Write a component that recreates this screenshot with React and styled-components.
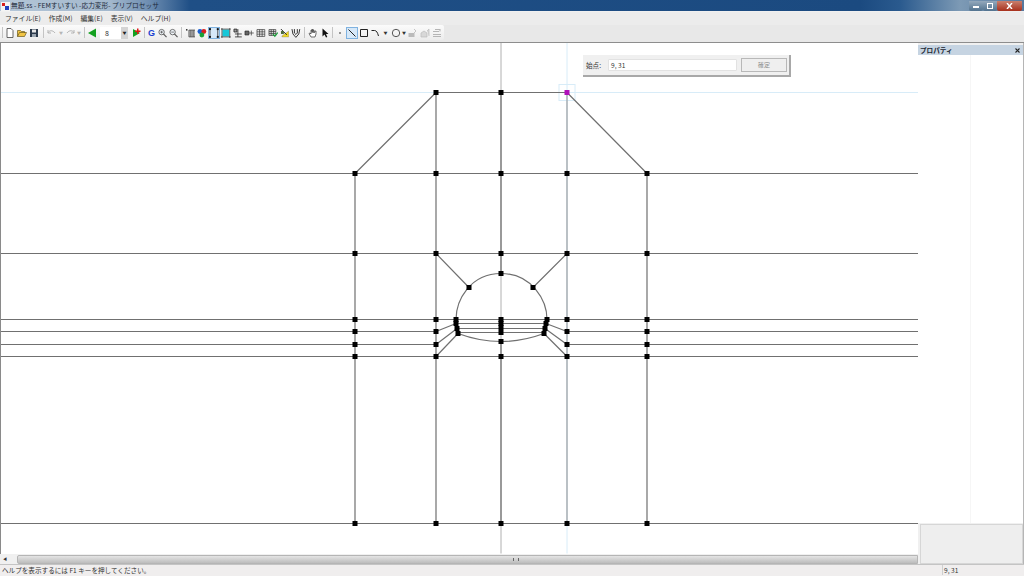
import React from 'react';
import styled, { createGlobalStyle } from 'styled-components';

const GlobalStyle = createGlobalStyle`
  html, body {
    margin: 0;
    padding: 0;
    width: 1024px;
    height: 576px;
    overflow: hidden;
    background: #f0f0f0;
    font-family: "Noto Sans CJK JP", "Liberation Sans", sans-serif;
  }
`;

const Window = styled.div`
  width: 1024px;
  height: 576px;
  display: flex;
  flex-direction: column;
  overflow: hidden;
`;

const TitleBar = styled.div`
  height: 11px;
  flex: none;
  display: flex;
  align-items: center;
  padding-left: 1px;
  background: linear-gradient(90deg, #b4c6d8 0, #a3b8cd 110px, #6c8cb0 150px, #1f4f86 190px, #1b4a80 860px, #2a5a8e 900px, #7d9ab5 960px, #55789e 1024px);
`;

const TitleText = styled.span`
  font-size: 6.7px;
  line-height: 11px;
  margin-left: 1px;
  color: #1d2a3a;
  white-space: nowrap;
`;

const WindowButtons = styled.div`
  margin-left: auto;
  margin-right: 2px;
  display: flex;
  height: 10px;
`;

const WindowButton = styled.div`
  width: ${({ wide }) => (wide ? '25px' : '14px')};
  height: 10px;
  display: flex;
  align-items: center;
  justify-content: center;
  background: ${({ wide }) => (wide ? 'linear-gradient(#c9806e, #a8301c)' : 'linear-gradient(#94a9bc, #52738f)')};
  border-radius: 0 0 2px 2px;
`;

const MenuBar = styled.div`
  height: 13px;
  flex: none;
  margin-top: 1px;
  display: flex;
  align-items: center;
  gap: 8px;
  padding-left: 5px;
  background: #ececec;
`;

const MenuItem = styled.span`
  font-size: 6.8px;
  line-height: 13px;
  color: #333;
  white-space: nowrap;
`;

const ToolRow = styled.div`
  height: 17px;
  flex: none;
  background: #e8e8e8;
  border-bottom: 1px solid #8d8d8d;
  display: flex;
  align-items: flex-start;
`;

const ToolBar = styled.div`
  width: 444px;
  height: 15px;
  padding-left: 1px;
  box-sizing: border-box;
  display: flex;
  align-items: center;
  background: linear-gradient(#fbfbfb, #ececec);
  border-radius: 0 2px 2px 0;
`;

const Tool = styled.div`
  width: ${({ w }) => w || 12}px;
  height: 12px;
  flex: none;
  box-sizing: border-box;
  display: flex;
  align-items: center;
  justify-content: center;
  border: 1px solid ${({ active }) => (active ? '#7fb2e0' : 'transparent')};
  background: ${({ active }) => (active ? '#d6e8f8' : 'transparent')};
`;

const Divider = styled.div`
  width: 1px;
  height: 11px;
  flex: none;
  margin: 0 ${({ m }) => m || 3}px;
  background: #c4c4c4;
`;

const SizeBox = styled.div`
  width: 28px;
  height: 12px;
  margin: 0 2px;
  flex: none;
  display: flex;
  align-items: center;
  background: #fff;
  font-size: 7px;
  color: #333;
  padding-left: 5px;
  box-sizing: border-box;
`;

const SizeArrow = styled.span`
  margin-left: auto;
  width: 7px;
  height: 12px;
  background: #d4d4d4;
  display: flex;
  align-items: center;
  justify-content: center;
  font-size: 4px;
  color: #222;
`;

const Main = styled.div`
  flex: 1;
  min-height: 0;
  display: flex;
`;

const Work = styled.div`
  width: 918px;
  flex: none;
  display: flex;
  flex-direction: column;
`;

const Canvas = styled.div`
  position: relative;
  height: 511px;
  flex: none;
  background: #fff;
  border-left: 1px solid #8a8a8a;
  box-sizing: border-box;
  overflow: hidden;
`;

const MeshSvg = styled.svg`
  display: block;
  margin-left: -1px;
`;

const Floating = styled.div`
  position: absolute;
  left: 582px;
  top: 12px;
  width: 208px;
  height: 22px;
  box-sizing: border-box;
  padding: 0 3px 0 3px;
  background: #f0f0f0;
  border-right: 2px solid #a8a8a8;
  border-bottom: 2px solid #a8a8a8;
  display: flex;
  align-items: center;
`;

const FloatLabel = styled.span`
  font-size: 6.6px;
  color: #333;
  width: 22px;
  flex: none;
`;

const FloatInput = styled.div`
  width: 129px;
  height: 12px;
  flex: none;
  box-sizing: border-box;
  background: #fff;
  border: 1px solid #e2e2e2;
  border-radius: 1px;
  font-size: 6.6px;
  line-height: 10px;
  padding-left: 2px;
  color: #333;
`;

const FloatButton = styled.div`
  width: 46px;
  height: 14px;
  margin-left: 4px;
  flex: none;
  box-sizing: border-box;
  border: 1px solid #b8b8b8;
  background: #efefef;
  font-size: 6px;
  line-height: 12px;
  text-align: center;
  color: #8c8c8c;
`;

const ScrollBar = styled.div`
  height: 10px;
  flex: none;
  display: flex;
  align-items: center;
  background: #f0f0f0;
`;

const ScrollEnd = styled.div`
  width: 17px;
  height: 10px;
  flex: none;
  font-size: 4px;
  line-height: 10px;
  padding-left: 3px;
  box-sizing: border-box;
  color: #333;
`;

const ScrollThumb = styled.div`
  flex: 1;
  height: 9px;
  padding-left: 96px;
  display: flex;
  align-items: center;
  justify-content: center;
  border-radius: 2px 0 0 2px;
  border: 1px solid #b5b5b5;
  box-sizing: border-box;
  background: linear-gradient(#e4e4e4, #bdbdbd);
`;

const Grip = styled.div`
  width: 4px;
  height: 3px;
  border-left: 1px solid #666;
  border-right: 1px solid #666;
`;

const Panel = styled.div`
  flex: 1;
  display: flex;
  flex-direction: column;
  background: #f0f0f0;
  border-right: 1px solid #b5b5b5;
  padding-top: 2px;
  box-sizing: border-box;
`;

const PanelHead = styled.div`
  height: 10px;
  flex: none;
  display: flex;
  align-items: center;
  justify-content: space-between;
  padding: 0 3px 0 2px;
  background: #c6d4e2;
  font-size: 6.6px;
  font-weight: 700;
  color: #1c2733;
`;

const PanelBody = styled.div`
  flex: 1;
  background: linear-gradient(90deg, #fff 52px, #f6f6f6 52px, #f6f6f6 53px, #fff 53px);
`;

const PanelBox = styled.div`
  height: 40px;
  flex: none;
  margin: 1px 0 0 2px;
  box-sizing: border-box;
  background: #eeeeee;
  border: 1px solid #d6d6d6;
`;

const StatusBar = styled.div`
  height: 12px;
  flex: none;
  display: flex;
  align-items: center;
  background: #f0eeee;
  border-top: 1px solid #c4c4c4;
  box-sizing: border-box;
  font-size: 6.6px;
  line-height: 10px;
  padding-bottom: 1px;
  color: #333;
`;

const StatusText = styled.span`
  width: 942px;
  flex: none;
  padding-left: 2px;
  box-sizing: border-box;
  white-space: nowrap;
`;

const StatusPane = styled.span`
  border-left: 1px solid #cfcfcf;
  padding-left: 1px;
`;

const Icon = ({ children, size = 10 }) => (
  <svg width={size} height={size} viewBox="0 0 10 10">
    {children}
  </svg>
);

const icons = {
  doc: <path d="M2 .5h4l2 2v7H2z" fill="#fff" stroke="#444" strokeWidth=".8" />,
  open: <path d="M.5 8.5v-6h3l1 1h3v1.500M.5 8.500l2-4h7l-2 4z" fill="#f2c544" stroke="#6a5a20" strokeWidth=".7" />,
  save: (
    <>
      <rect x="1" y="1" width="8" height="8" fill="#2c3a4c" />
      <rect x="3" y="1.500" width="4" height="3" fill="#e8e8e8" />
      <rect x="3" y="6" width="4" height="3" fill="#9aa5b0" />
    </>
  ),
  undo: <path d="M1 5c1-3 5-3 7 0M1 2v3h3" fill="none" stroke="#b5b5b5" strokeWidth="1" />,
  redo: <path d="M9 5C8 2 4 2 2 5M9 2v3H6" fill="none" stroke="#b5b5b5" strokeWidth="1" />,
  back: <path d="M1 5l8-4.500v9z" fill="#14a020" />,
  next: (
    <>
      <path d="M9 5L2 1v8z" fill="#14a020" />
      <path d="M6 .5h1.500v2H9.500v1.500h-2v2H6V4H4V2.500h2z" fill="#e01818" />
    </>
  ),
  g: <text x="5" y="8.500" textAnchor="middle" fontSize="10" fontWeight="700" fill="#1a3fd0" fontFamily="Liberation Sans">G</text>,
  zoomIn: (
    <>
      <circle cx="4" cy="4" r="3" fill="#eef3f8" stroke="#555" strokeWidth=".9" />
      <path d="M6 6l3.500 3.500" stroke="#555" strokeWidth="1.300" />
      <path d="M2.500 4h3M4 2.500v3" stroke="#333" strokeWidth=".7" />
    </>
  ),
  zoomOut: (
    <>
      <circle cx="4" cy="4" r="3" fill="#eef3f8" stroke="#555" strokeWidth=".9" />
      <path d="M6 6l3.500 3.500" stroke="#555" strokeWidth="1.300" />
      <path d="M2.500 4h3" stroke="#333" strokeWidth=".7" />
    </>
  ),
  bars: (
    <>
      <rect x="0" y="1" width="1.500" height="1.500" fill="#222" />
      <path d="M3 2h6.500v7H3zM5 2v7M7.300 2v7" fill="#bbb" stroke="#444" strokeWidth=".8" />
    </>
  ),
  balls: (
    <>
      <circle cx="3" cy="3.500" r="2.500" fill="#1b5fd0" />
      <circle cx="7" cy="3.500" r="2.500" fill="#d81e1e" />
      <circle cx="5" cy="7" r="2.500" fill="#18a038" />
    </>
  ),
  span: (
    <>
      <rect x="0" y="0" width="2" height="2" fill="#111" />
      <rect x="8" y="8" width="2" height="2" fill="#111" />
      <path d="M1 1v8M9 1v8" stroke="#222" strokeWidth=".8" />
      <rect x="8" y="0" width="2" height="2" fill="#111" />
      <rect x="0" y="8" width="2" height="2" fill="#111" />
    </>
  ),
  cyan: (
    <>
      <rect x="1.500" y="1.500" width="7" height="7" fill="#18c8d8" />
      <path d="M0 1h10M0 9h10M1 0v10M9 0v10" stroke="#222" strokeWidth=".7" />
    </>
  ),
  steps: <path d="M1 1h3v3H1zM5 1v8M2 6h7M2 9h7" fill="#999" stroke="#222" strokeWidth=".8" />,
  nodes: (
    <>
      <path d="M1 3h4v4H1z" fill="#666" stroke="#222" strokeWidth=".7" />
      <path d="M5 5h5M7.500 2.500v5" stroke="#444" strokeWidth=".8" />
    </>
  ),
  grid: <path d="M1 1.500h8v7H1zM1 3.800h8M1 6.200h8M3.700 1.500v7M6.300 1.500v7" fill="#eee" stroke="#333" strokeWidth=".7" />,
  gridGreen: (
    <>
      <path d="M1 1.500h7v6H1zM1 3.500h7M1 5.500h7M3.300 1.500v6M5.700 1.500v6" fill="#ddd" stroke="#333" strokeWidth=".7" />
      <path d="M5 6l2 2.500 3-4" fill="none" stroke="#18a038" strokeWidth="1.200" />
    </>
  ),
  yellow: (
    <>
      <path d="M2 8l7-5v6H2z" fill="#f0d820" stroke="#777" strokeWidth=".4" />
      <path d="M1 1l6 6" stroke="#222" strokeWidth="1" />
      <rect x="1" y="3" width="3" height="3" fill="#4a6a3a" />
    </>
  ),
  shield: <path d="M1 1l1 5 3 3.500L8 6l1-5M3.500 1v4L5 6.500 6.500 5V1" fill="none" stroke="#333" strokeWidth="1" />,
  hand: <path d="M3 9L1 5.500l1-.5 1 1V2l1 0v2.500V1.500h1V4.500V2h1v3l1-2h1v3L7 9z" fill="#fff" stroke="#333" strokeWidth=".7" />,
  pointer: <path d="M2.500.500v8l2-2 1.500 3 1.300-.6L6 6h2.500z" fill="#111" />,
  dot: <rect x="4.300" y="4.300" width="1.400" height="1.400" fill="#333" />,
  line: <path d="M1.500 1.500l7 7" stroke="#222" strokeWidth="1" />,
  rect: <path d="M1.500 1.500h7v7h-7z" fill="none" stroke="#222" strokeWidth="1" />,
  curve: <path d="M.5 2.500h3c2 0 3 2 4 5.500" fill="none" stroke="#222" strokeWidth="1" />,
  circle: <circle cx="5" cy="5" r="3.700" fill="none" stroke="#444" strokeWidth=".9" />,
  box3d: (
    <>
      <path d="M.5 5h6v4h-6z" fill="#bbb" />
      <path d="M6 1l2 2-2 2" fill="none" stroke="#c4c4c4" />
    </>
  ),
  house: <path d="M1 9V5l3-2 3 2v4zM7 3l2-2v7" fill="#d8d8d8" stroke="#bbb" strokeWidth=".7" />,
  stack: <path d="M1 3.500h6M3 1.500h5v2M1 6.500h8M1 8.500h8" fill="none" stroke="#b5b5b5" strokeWidth="1.100" />,
};

const Caret = styled.span`
  width: ${({ w }) => w || 6}px;
  flex: none;
  text-align: center;
  font-size: 4px;
  color: ${({ dim }) => (dim ? '#b5b5b5' : '#333')};
`;

const Tb = ({ name, active, w }) => (
  <Tool active={active} w={w}>
    <Icon>{icons[name]}</Icon>
  </Tool>
);

const outerRows = [173, 253, 319, 331, 344, 356, 523];
const fullRows = [173, 253, 319, 356, 523];

const nodes = [
  [436, 92], [501, 92],
  ...outerRows.flatMap((y) => [[355, y], [436, y], [567, y], [647, y]]),
  [501, 173], [501, 253], [501, 273], [469, 287], [533, 287],
  [456, 319], [456, 323], [457, 328], [458, 333],
  [501, 319], [501, 323], [501, 327], [501, 332], [501, 341], [501, 356], [501, 523],
  [547, 319], [546, 323], [545, 328], [544, 333],
];

const meshPaths = [
  'M436 92H567M355 173L436 92M567 92L647 173',
  'M355 173V523M436 92V523M647 173V523',
  'M501 92V273M501 341V523',
  ...fullRows.map((y) => `M0 ${y}H918`),
  'M0 331H436M567 331H918M0 344H436M567 344H918',
  'M436 253L469 287M567 253L533 287',
  'M456 319C456 300 470 273 501 273C532 273 547 300 547 319',
  'M456 319L458 333M547 319L544 333',
  'M456 323H546M457 328H545M458 332H544',
  'M458 333Q501 349 544 333',
  'M436 331L456 323M436 344L457 328M436 356L458 333',
  'M567 331L546 323M567 344L545 328M567 356L544 333',
];

const Mesh = () => (
  <MeshSvg width="918" height="511" viewBox="0 42.500 918 511">
    <path d="M567 42V553M0 92H918" stroke="#d8ecf8" strokeWidth="1" fill="none" />
    <rect x="559" y="84" width="16" height="16" fill="none" stroke="#d8ecf8" />
    <path d="M501 42V553" stroke="#b0b0b0" strokeWidth="1" fill="none" />
    <path d="M567 92V523" stroke="#a0a4a8" strokeWidth="1.300" fill="none" />
    {meshPaths.map((d) => (
      <path key={d} d={d} fill="none" stroke="#707070" strokeWidth="1.200" />
    ))}
    {nodes.map(([x, y]) => (
      <rect key={`${x}-${y}`} x={x - 2.5} y={y - 2.5} width="5" height="5" fill="#000" />
    ))}
    <rect x="564.500" y="89.500" width="5" height="5" fill="#b010b8" />
  </MeshSvg>
);

export default function App() {
  return (
    <Window>
      <GlobalStyle />
      <TitleBar>
        <svg width="9" height="10" viewBox="0 0 9 10">
          <rect x="0" y="1" width="9" height="9" fill="#f4f4f4" />
          <rect x="1" y="2" width="3" height="3" fill="#d82020" />
          <rect x="4" y="5" width="4" height="4" fill="#2040c0" />
        </svg>
        <TitleText>無題.ss - FEMすいすい -応力変形- プリプロセッサ</TitleText>
        <WindowButtons>
          <WindowButton>
            <svg width="6" height="4"><rect y="2" width="6" height="2" fill="#fff" /></svg>
          </WindowButton>
          <WindowButton>
            <svg width="6" height="6"><rect x=".5" y=".5" width="5" height="5" fill="none" stroke="#fff" /></svg>
          </WindowButton>
          <WindowButton wide>
            <svg width="7" height="6"><path d="M1 0l5 6M6 0L1 6" stroke="#fff" strokeWidth="1.400" /></svg>
          </WindowButton>
        </WindowButtons>
      </TitleBar>
      <MenuBar>
        <MenuItem>ファイル(E)</MenuItem>
        <MenuItem>作成(M)</MenuItem>
        <MenuItem>編集(E)</MenuItem>
        <MenuItem>表示(V)</MenuItem>
        <MenuItem>ヘルプ(H)</MenuItem>
      </MenuBar>
      <ToolRow>
        <ToolBar>
          <Divider m={1} />
          <Tb name="doc" />
          <Tb name="open" />
          <Tb name="save" />
          <Divider m={2.5} />
          <Tb name="undo" />
          <Caret dim>▼</Caret>
          <Tb name="redo" />
          <Caret dim>▼</Caret>
          <Divider m={1.5} />
          <Tb name="back" />
          <SizeBox>
            8
            <SizeArrow>▼</SizeArrow>
          </SizeBox>
          <Tb name="next" />
          <Divider m={1.5} />
          <Tb name="g" w={11} />
          <Tb name="zoomIn" w={11} />
          <Tb name="zoomOut" w={11} />
          <Divider m={2.25} />
          <Tb name="bars" w={11.75} />
          <Tb name="balls" w={11.75} />
          <Tb name="span" w={11.75} active />
          <Tb name="cyan" w={11.75} />
          <Tb name="steps" w={11.75} />
          <Tb name="nodes" w={11.75} />
          <Tb name="grid" w={11.75} />
          <Tb name="gridGreen" w={11.75} />
          <Tb name="yellow" w={11.75} />
          <Tb name="shield" w={11.75} />
          <Divider m={1.75} />
          <Tb name="hand" />
          <Tb name="pointer" />
          <Divider m={1} />
          <Tb name="dot" />
          <Tb name="line" active />
          <Tb name="rect" />
          <Tb name="curve" />
          <Caret w={8}>▼</Caret>
          <Tb name="circle" />
          <Caret w={5}>▼</Caret>
          <Tb name="box3d" />
          <Tb name="house" />
          <Tb name="stack" />
        </ToolBar>
      </ToolRow>
      <Main>
        <Work>
          <Canvas>
            <Mesh />
            <Floating>
              <FloatLabel>始点:</FloatLabel>
              <FloatInput>9, 31</FloatInput>
              <FloatButton>確定</FloatButton>
            </Floating>
          </Canvas>
          <ScrollBar>
            <ScrollEnd>◀</ScrollEnd>
            <ScrollThumb>
              <Grip />
            </ScrollThumb>
          </ScrollBar>
        </Work>
        <Panel>
          <PanelHead>
            プロパティ
            <svg width="5" height="5"><path d="M.5.500l4 4M4.500.500l-4 4" stroke="#222" strokeWidth="1.100" /></svg>
          </PanelHead>
          <PanelBody />
          <PanelBox />
        </Panel>
      </Main>
      <StatusBar>
        <StatusText>ヘルプを表示するには F1 キーを押してください。</StatusText>
        <StatusPane>9, 31</StatusPane>
      </StatusBar>
    </Window>
  );
}
